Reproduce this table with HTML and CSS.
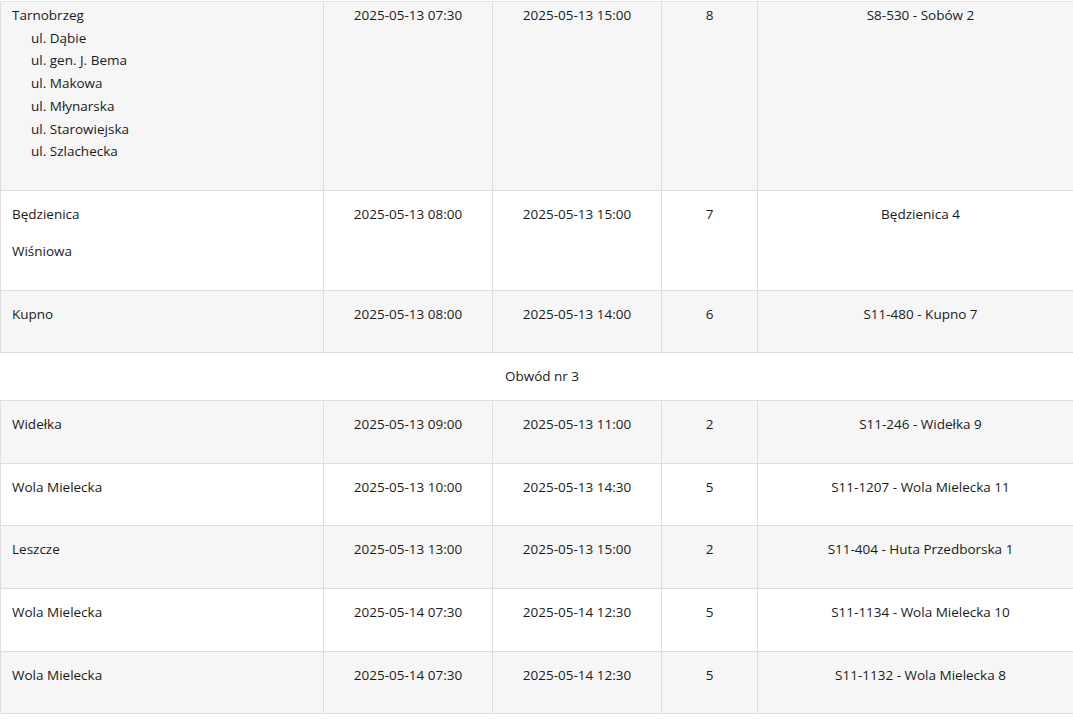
FILE: index.html
```html
<!DOCTYPE html>
<html lang="pl">
<head>
<meta charset="utf-8">
<title>Wyłączenia prądu</title>
<link rel="stylesheet" href="styles.css">
</head>
<body>
<table class="schedule">
  <colgroup>
    <col class="c-place">
    <col class="c-date">
    <col class="c-date">
    <col class="c-num">
    <col class="c-station">
  </colgroup>
  <tbody>
    <tr class="row alt first">
      <td class="place">
        <p class="town">Tarnobrzeg</p>
        <ul class="streets">
          <li>ul. Dąbie</li>
          <li>ul. gen. J. Bema</li>
          <li>ul. Makowa</li>
          <li>ul. Młynarska</li>
          <li>ul. Starowiejska</li>
          <li>ul. Szlachecka</li>
        </ul>
      </td>
      <td><p>2025-05-13 07:30</p></td>
      <td><p>2025-05-13 15:00</p></td>
      <td><p>8</p></td>
      <td><p>S8-530 - Sobów 2</p></td>
    </tr>
    <tr class="row">
      <td class="place"><p>Będzienica</p><p>Wiśniowa</p></td>
      <td><p>2025-05-13 08:00</p></td>
      <td><p>2025-05-13 15:00</p></td>
      <td><p>7</p></td>
      <td><p>Będzienica 4</p></td>
    </tr>
    <tr class="row alt">
      <td class="place"><p>Kupno</p></td>
      <td><p>2025-05-13 08:00</p></td>
      <td><p>2025-05-13 14:00</p></td>
      <td><p>6</p></td>
      <td><p>S11-480 - Kupno 7</p></td>
    </tr>
    <tr class="group">
      <td colspan="5">Obwód nr 3</td>
    </tr>
    <tr class="row alt">
      <td class="place"><p>Widełka</p></td>
      <td><p>2025-05-13 09:00</p></td>
      <td><p>2025-05-13 11:00</p></td>
      <td><p>2</p></td>
      <td><p>S11-246 - Widełka 9</p></td>
    </tr>
    <tr class="row">
      <td class="place"><p>Wola Mielecka</p></td>
      <td><p>2025-05-13 10:00</p></td>
      <td><p>2025-05-13 14:30</p></td>
      <td><p>5</p></td>
      <td><p>S11-1207 - Wola Mielecka 11</p></td>
    </tr>
    <tr class="row alt">
      <td class="place"><p>Leszcze</p></td>
      <td><p>2025-05-13 13:00</p></td>
      <td><p>2025-05-13 15:00</p></td>
      <td><p>2</p></td>
      <td><p>S11-404 - Huta Przedborska 1</p></td>
    </tr>
    <tr class="row">
      <td class="place"><p>Wola Mielecka</p></td>
      <td><p>2025-05-14 07:30</p></td>
      <td><p>2025-05-14 12:30</p></td>
      <td><p>5</p></td>
      <td><p>S11-1134 - Wola Mielecka 10</p></td>
    </tr>
    <tr class="row alt">
      <td class="place"><p>Wola Mielecka</p></td>
      <td><p>2025-05-14 07:30</p></td>
      <td><p>2025-05-14 12:30</p></td>
      <td><p>5</p></td>
      <td><p>S11-1132 - Wola Mielecka 8</p></td>
    </tr>
  </tbody>
</table>
</body>
</html>
```

FILE: styles.css
```css
html, body {
  margin: 0;
  padding: 0;
  background: #ffffff;
  overflow: hidden;
}

body {
  font-family: "Open Sans", "Noto Sans", sans-serif;
  font-size: 13.5px;
  color: #1a1a1a;
  line-height: 23px;
}

.schedule {
  border-collapse: collapse;
  table-layout: fixed;
  width: 1083px;
  margin-top: 1px;
}

.c-place { width: 323px; }
.c-date { width: 169px; }
.c-num { width: 96px; }
.c-station { width: 326px; }

.schedule td {
  border: 1px solid #dedede;
  padding: 12px 12px 12px;
  vertical-align: top;
  text-align: center;
}

.schedule td.place {
  text-align: left;
  padding-left: 11px;
}

.schedule p {
  margin: 0 0 14.6px;
}

.row.alt td {
  background: #f6f6f6;
}

.row.first td {
  padding-top: 2px;
  border-top-color: #e4e4e4;
}

.town {
  line-height: 22.7px;
}

.row.first .town {
  margin-bottom: 0;
}

.streets {
  list-style: none;
  margin: 0 0 14.6px;
  padding: 0 0 0 19px;
  line-height: 22.7px;
}

.group td {
  border-left: none;
  border-right: none;
  text-align: center;
  padding: 12px 12px 12px;
  background: #ffffff;
}
```
